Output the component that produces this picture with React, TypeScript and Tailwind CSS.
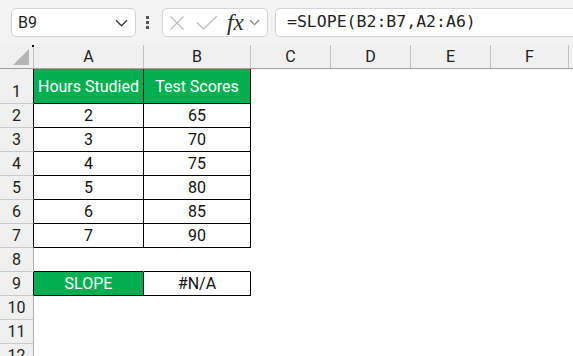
import React from "react";

const COLS = [
  { key: "A", w: "w-[110px]" },
  { key: "B", w: "w-[107px]" },
  { key: "C", w: "w-[80px]" },
  { key: "D", w: "w-[80px]" },
  { key: "E", w: "w-[80px]" },
  { key: "F", w: "w-[78px]" },
];

type Row = {
  n: number;
  h: string;
  a?: string;
  b?: string;
  head?: boolean;
  boxed?: boolean;
  boxBottom?: boolean;
  slope?: boolean;
};

const ROWS: Row[] = [
  { n: 1, h: "h-[35px]", a: "Hours Studied", b: "Test Scores", head: true, boxed: true },
  { n: 2, h: "h-[24px]", a: "2", b: "65", boxed: true },
  { n: 3, h: "h-[24px]", a: "3", b: "70", boxed: true },
  { n: 4, h: "h-[24px]", a: "4", b: "75", boxed: true },
  { n: 5, h: "h-[24px]", a: "5", b: "80", boxed: true },
  { n: 6, h: "h-[24px]", a: "6", b: "85", boxed: true },
  { n: 7, h: "h-[24px]", a: "7", b: "90", boxed: true },
  { n: 8, h: "h-[24px]", boxBottom: true },
  { n: 9, h: "h-[24px]", a: "SLOPE", b: "#N/A", slope: true, boxed: true },
  { n: 10, h: "h-[24px]" },
  { n: 11, h: "h-[24px]" },
  { n: 12, h: "h-[24px]" },
];

function TopBar() {
  return (
    <div className="flex h-[45px] items-center bg-[#f3f3f3] pl-[11px]">
      <div className="flex h-[29px] w-[125px] items-center justify-between rounded-[5px] border border-[#d4d4d4] bg-white pl-[6px] pr-[7px]">
        <span className="text-[16px] text-[#1f1f1f]">B9</span>
        <svg width="13" height="8" viewBox="0 0 13 8" fill="none" stroke="#3a3a3a" strokeWidth="1.4">
          <path d="M1 1.2l5.5 5.5L12 1.2" />
        </svg>
      </div>
      <div className="ml-[10px] flex w-[5px] flex-col gap-[2px]">
        <span className="h-[3px] w-[3px] bg-[#555]" />
        <span className="h-[3px] w-[3px] bg-[#555]" />
        <span className="h-[3px] w-[3px] bg-[#555]" />
      </div>
      <div className="ml-[11px] flex h-[29px] w-[106px] items-center rounded-[5px] border border-[#d4d4d4] bg-white pl-[6px]">
        <svg width="16" height="16" viewBox="0 0 16 16" fill="none" stroke="#bdbdbd" strokeWidth="1.3">
          <path d="M1.5 1.5l13 13M14.5 1.5l-13 13" />
        </svg>
        <svg className="ml-[11px]" width="22" height="15" viewBox="0 0 22 15" fill="none" stroke="#bdbdbd" strokeWidth="1.3">
          <path d="M1 7.5l6.5 6.5L21 1" />
        </svg>
        <span
          className="ml-[9px] text-[23px] italic leading-none text-[#2a2a2a]"
          style={{ fontFamily: '"Liberation Serif", serif' }}
        >
          fx
        </span>
        <svg className="ml-[5px]" width="11" height="7" viewBox="0 0 11 7" fill="none" stroke="#888" strokeWidth="1.2">
          <path d="M0.8 1l4.7 4.7L10.2 1" />
        </svg>
      </div>
      <div className="ml-[7px] flex h-[29px] flex-1 items-center rounded-l-[5px] border border-r-0 border-[#d4d4d4] bg-white pl-[11px]">
        <span
          className="text-[16.5px] text-[#1f1f1f]"
          style={{ fontFamily: '"DejaVu Sans Mono", "Liberation Mono", monospace' }}
        >
          =SLOPE(B2:B7,A2:A6)
        </span>
      </div>
    </div>
  );
}

function HeaderRow() {
  return (
    <div className="flex h-[24px] border-b border-[#9f9f9f] bg-[#f0f0f0]">
      <div className="relative w-[34px] shrink-0 border-r border-[#c4c4c4]">
        <span className="absolute right-[-1px] top-0 h-[2px] w-[2px] bg-black" />
        <svg className="absolute bottom-[3px] right-[4px]" width="16" height="16" viewBox="0 0 16 16">
          <path d="M16 0V16H0Z" fill="#b5b5b5" />
        </svg>
      </div>
      {COLS.map((c) => (
        <div
          key={c.key}
          className={`${c.w} flex shrink-0 items-center justify-center border-r border-[#c4c4c4] pt-[1px] text-[16px] text-[#222]`}
        >
          {c.key}
        </div>
      ))}
      <div className="flex-1" />
    </div>
  );
}

function SheetRow({ row }: { row: Row }) {
  const inBox = row.boxed;
  const green = row.head || row.slope;
  const cellBase = "flex shrink-0 items-center justify-center pt-[1px] text-[16px]";
  const bottom = inBox || row.boxBottom ? "border-b border-b-black" : "border-b border-b-transparent";
  const side = inBox ? "border-r border-r-black" : "border-r border-r-transparent";
  return (
    <div className={`flex ${row.h}`}>
      <div
        className={`flex w-[34px] shrink-0 items-end justify-center border-b border-r border-b-[#c9c9c9] bg-[#f0f0f0] text-[16px] leading-[22px] text-[#222] ${
          inBox ? "border-r-black" : "border-r-[#b0b0b0]"
        }`}
      >
        {row.n}
      </div>
      <div
        className={`w-[110px] ${cellBase} ${bottom} ${side} ${green ? "bg-[#00b050] text-white" : "text-[#111]"}`}
      >
        {row.a}
      </div>
      <div
        className={`w-[107px] ${cellBase} ${bottom} ${side} ${row.head ? "bg-[#00b050] text-white" : "text-[#111]"}`}
      >
        {row.b}
      </div>
      <div className="flex-1 bg-white" />
    </div>
  );
}

export default function App() {
  return (
    <div
      className="h-[356px] w-[573px] overflow-hidden bg-white"
      style={{ fontFamily: 'Roboto, "Liberation Sans", sans-serif' }}
    >
      <TopBar />
      <HeaderRow />
      {ROWS.map((r) => (
        <SheetRow key={r.n} row={r} />
      ))}
    </div>
  );
}
